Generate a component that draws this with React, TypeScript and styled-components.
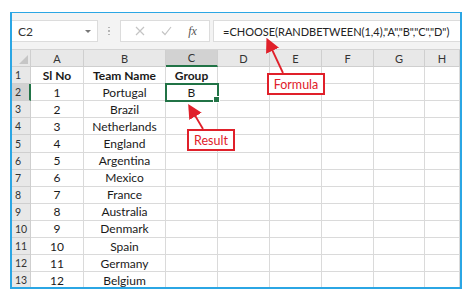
import styled, { createGlobalStyle } from "styled-components";

const GlobalStyle = createGlobalStyle`
    html, body {
        margin: 0;
        padding: 0;
        background: #ffffff;
    }
    body {
        font-family: Lato, "Open Sans", sans-serif;
        width: 474px;
        height: 301px;
        overflow: hidden;
    }
`;

const Page = styled.div`
    position: relative;
    width: 474px;
    height: 301px;
    padding: 12px 0 0 10px;
    box-sizing: border-box;
`;

const Frame = styled.div`
    width: 452px;
    height: 277px;
    box-sizing: border-box;
    border: 2px solid #2ba6e4;
    border-top-width: 1px;
    background: #ffffff;
    display: flex;
    flex-direction: column;
    overflow: hidden;
`;

const Toolbar = styled.div`
    height: 36px;
    flex-shrink: 0;
    background: #f3f3f3;
    display: flex;
    align-items: center;
    box-sizing: border-box;
`;

const NameBox = styled.div`
    flex-shrink: 0;
    width: 86px;
    height: 22px;
    background: #ffffff;
    border: 1px solid #dcdcdc;
    border-left: none;
    box-sizing: border-box;
    display: flex;
    align-items: center;
    justify-content: space-between;
    padding: 0 6px 0 6px;
    font-size: 12px;
    color: #333;
`;

const Caret = styled.span`
    width: 0;
    height: 0;
    border-left: 3px solid transparent;
    border-right: 3px solid transparent;
    border-top: 3px solid #777;
`;

const Dots = styled.div`
    flex-shrink: 0;
    width: 22px;
    display: flex;
    flex-direction: column;
    align-items: center;
    gap: 2px;
    span {
        width: 1.5px;
        height: 1.5px;
        background: #b5b5b5;
    }
`;

const FxBox = styled.div`
    flex-shrink: 0;
    width: 90px;
    height: 22px;
    background: #ffffff;
    border: 1px solid #dcdcdc;
    box-sizing: border-box;
    display: flex;
    align-items: center;
    justify-content: space-around;
    padding: 0 4px 0 6px;
`;

const Fx = styled.span`
    font-family: "Liberation Serif", serif;
    font-style: italic;
    font-size: 12px;
    color: #555;
`;

const FormulaBox = styled.div`
    flex: 1;
    min-width: 0;
    overflow: hidden;
    margin-left: 3px;
    height: 22px;
    background: #ffffff;
    border: 1px solid #dcdcdc;
    border-right: none;
    box-sizing: border-box;
    display: flex;
    align-items: center;
    padding-left: 9px;
    font-size: 11px;
    color: #222;
    white-space: nowrap;
`;

const Grid = styled.div`
    display: grid;
    grid-template-columns: 19px 53px 82px 52px 52px 52px 52px 51px 1fr;
    grid-auto-rows: 17.1px;
    border-top: 1px solid #d4d4d4;
`;

const ColHead = styled.div<{ $active?: boolean }>`
    background: ${(p) => (p.$active ? "#d2d2d2" : "#e8e8e8")};
    border-right: 1px solid #cfcfcf;
    border-bottom: ${(p) => (p.$active ? "2px solid #217346" : "1px solid #cfcfcf")};
    box-sizing: border-box;
    display: flex;
    align-items: center;
    justify-content: center;
    font-size: 11px;
    color: #333;
`;

const Corner = styled.div`
    background: #e8e8e8;
    border-right: 1px solid #cfcfcf;
    border-bottom: 1px solid #cfcfcf;
    box-sizing: border-box;
    position: relative;
    &::after {
        content: "";
        position: absolute;
        right: 2px;
        bottom: 2px;
        border-left: 9px solid transparent;
        border-bottom: 9px solid #c6c6c6;
    }
`;

const RowHead = styled.div<{ $active?: boolean }>`
    background: ${(p) => (p.$active ? "#d2d2d2" : "#e8e8e8")};
    border-right: ${(p) => (p.$active ? "2px solid #217346" : "1px solid #cfcfcf")};
    border-bottom: 1px solid #cfcfcf;
    box-sizing: border-box;
    display: flex;
    align-items: center;
    padding-left: 3px;
    font-size: 10.5px;
    color: #333;
`;

const Cell = styled.div<{ $bold?: boolean; $selected?: boolean }>`
    position: relative;
    border-right: 1px solid #dadada;
    border-bottom: 1px solid #dadada;
    box-sizing: border-box;
    display: flex;
    align-items: center;
    justify-content: center;
    font-size: 12px;
    font-weight: ${(p) => (p.$bold ? 700 : 400)};
    color: #1a1a1a;
    white-space: nowrap;
    ${(p) =>
        p.$selected &&
        `
        outline: 2px solid #217346;
        outline-offset: -1px;
        z-index: 1;
        &::after {
            content: "";
            position: absolute;
            right: -3px;
            bottom: -3px;
            width: 5px;
            height: 5px;
            background: #217346;
            border: 1px solid #fff;
        }
    `}
`;

const Callout = styled.div<{ $x: number; $y: number; $w: number }>`
    position: absolute;
    left: ${(p) => p.$x}px;
    top: ${(p) => p.$y}px;
    width: ${(p) => p.$w}px;
    height: 22px;
    box-sizing: border-box;
    border: 2px solid #e0202a;
    background: #ffffff;
    color: #e0202a;
    font-size: 12.5px;
    display: flex;
    align-items: center;
    justify-content: center;
    z-index: 3;
`;

const Arrows = styled.svg`
    position: absolute;
    left: 0;
    top: 0;
    pointer-events: none;
    z-index: 4;
`;

const teams = [
    "Portugal",
    "Brazil",
    "Netherlands",
    "England",
    "Argentina",
    "Mexico",
    "France",
    "Australia",
    "Denmark",
    "Spain",
    "Germany",
    "Belgium",
];

const cols = ["A", "B", "C", "D", "E", "F", "G", "H"];

export default function App() {
    const rows: string[][] = [["Sl No", "Team Name", "Group"]];
    teams.forEach((t, i) => rows.push([String(i + 1), t, i === 0 ? "B" : ""]));

    return (
        <>
            <GlobalStyle />
            <Page>
                <Frame>
                    <Toolbar>
                        <NameBox>
                            C2
                            <Caret />
                        </NameBox>
                        <Dots>
                            <span />
                            <span />
                            <span />
                        </Dots>
                        <FxBox>
                            <svg width="10" height="10" viewBox="0 0 10 10">
                                <path d="M1 1L9 9M9 1L1 9" stroke="#c4c4c4" strokeWidth="1.2" />
                            </svg>
                            <svg width="11" height="10" viewBox="0 0 11 10">
                                <path d="M1 5.5L4 8.5L10 1" stroke="#c4c4c4" strokeWidth="1.2" fill="none" />
                            </svg>
                            <Fx>fx</Fx>
                        </FxBox>
                        <FormulaBox>=CHOOSE(RANDBETWEEN(1,4),"A","B","C","D")</FormulaBox>
                    </Toolbar>
                    <Grid>
                        <Corner />
                        {cols.map((c) => (
                            <ColHead key={c} $active={c === "C"}>
                                {c}
                            </ColHead>
                        ))}
                        {rows.map((r, ri) => [
                            <RowHead key={`h${ri}`} $active={ri === 1}>
                                {ri + 1}
                            </RowHead>,
                            ...cols.map((c, ci) => (
                                <Cell
                                    key={`${ri}-${c}`}
                                    $bold={ri === 0}
                                    $selected={ri === 1 && ci === 2}
                                >
                                    {r[ci] ?? ""}
                                </Cell>
                            )),
                        ])}
                    </Grid>
                </Frame>
                <Callout $x={267} $y={73} $w={58}>
                    Formula
                </Callout>
                <Callout $x={187} $y={129} $w={48}>
                    Result
                </Callout>
                <Arrows width="474" height="301" viewBox="0 0 474 301">
                    <defs>
                        <marker id="head" markerWidth="8" markerHeight="8" refX="6" refY="4" orient="auto">
                            <path d="M0 0L8 4L0 8Z" fill="#e0202a" />
                        </marker>
                    </defs>
                    <line x1="283" y1="73" x2="268" y2="41" stroke="#e0202a" strokeWidth="1.8" markerEnd="url(#head)" />
                    <line x1="203" y1="129" x2="190" y2="107" stroke="#e0202a" strokeWidth="1.8" markerEnd="url(#head)" />
                </Arrows>
            </Page>
        </>
    );
}
